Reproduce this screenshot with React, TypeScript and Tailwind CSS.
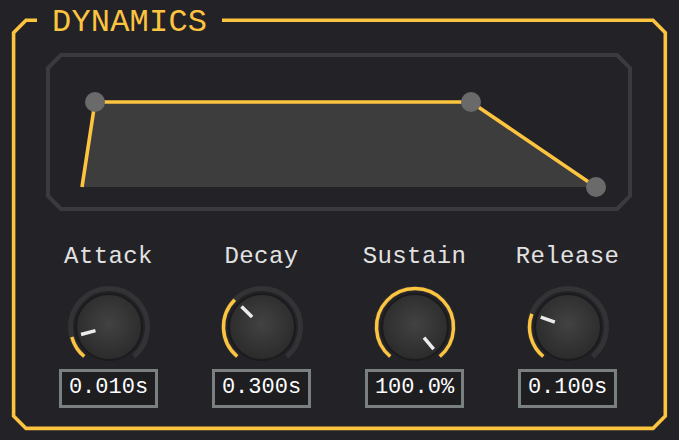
import React from "react";

const YELLOW = "#fcc43f";

function pt(cx: number, cy: number, r: number, deg: number) {
  const a = (deg * Math.PI) / 180;
  return [cx + r * Math.sin(a), cy - r * Math.cos(a)];
}

function arc(cx: number, cy: number, r: number, a0: number, a1: number) {
  const [x0, y0] = pt(cx, cy, r, a0);
  const [x1, y1] = pt(cx, cy, r, a1);
  const large = a1 - a0 > 180 ? 1 : 0;
  return `M ${x0} ${y0} A ${r} ${r} 0 ${large} 1 ${x1} ${y1}`;
}

function Knob({ angle, id }: { angle: number; id: string }) {
  const c = 42;
  const [ix0, iy0] = pt(c, c, 14, angle);
  const [ix1, iy1] = pt(c, c, 29, angle);
  return (
    <svg width="84" height="84" viewBox="0 0 84 84">
      <defs>
        <radialGradient id={id} cx="50%" cy="45%" r="55%">
          <stop offset="0%" stopColor="#424242" />
          <stop offset="100%" stopColor="#2b2b2c" />
        </radialGradient>
      </defs>
      <path d={arc(c, c, 38.5, -140, 140)} stroke="#333336" strokeWidth="5" fill="none" />
      <path d={arc(c, c, 38.5, -140, angle)} stroke={YELLOW} strokeWidth="3.5" fill="none" />
      <circle cx={c} cy={c} r="33" fill={`url(#${id})`} stroke="#1b1b1d" strokeWidth="2" />
      <line x1={ix0} y1={iy0} x2={ix1} y2={iy1} stroke="#ececec" strokeWidth="3.5" />
    </svg>
  );
}

const knobs = [
  { label: "Attack", value: "0.010s", angle: -105 },
  { label: "Decay", value: "0.300s", angle: -45 },
  { label: "Sustain", value: "100.0%", angle: 140 },
  { label: "Release", value: "0.100s", angle: -70 },
];

export default function App() {
  return (
    <div
      className="relative w-[679px] h-[440px] bg-[#232227] overflow-hidden"
      style={{ fontFamily: '"Liberation Mono", "DejaVu Sans Mono", monospace' }}
    >
      <svg className="absolute inset-0 pointer-events-none" width="679" height="440">
        <path
          d="M 37 20.3 L 26 20.3 L 13.6 32.7 L 13.6 416 L 26 428.4 L 653 428.4 L 665.3 416 L 665.3 32.7 L 653 20.3 L 222 20.3"
          stroke={YELLOW}
          strokeWidth="3.6"
          fill="none"
        />
      </svg>
      <div className="relative pt-[7px] pl-[52px] text-[32px] leading-[32px] text-[#fcc43f] tracking-[0.2px]">
        DYNAMICS
      </div>
      <div className="relative mt-[14px] ml-[46px]">
        <svg width="586" height="158" viewBox="0 0 586 158">
          <path
            d="M 15 2 L 571 2 L 584 15 L 584 143 L 571 156 L 15 156 L 2 143 L 2 15 Z"
            stroke="#3b3b3d"
            strokeWidth="4"
            fill="none"
          />
          <polygon points="36,134 49,49 425,49 550,134" fill="#3d3d3e" />
          <polyline
            points="36,134 49,49 425,49 550,134"
            stroke={YELLOW}
            strokeWidth="3.6"
            fill="none"
          />
          <circle cx="49" cy="49" r="10" fill="#6a6a6b" />
          <circle cx="425" cy="49" r="10" fill="#6a6a6b" />
          <circle cx="550" cy="134" r="10" fill="#6a6a6b" />
        </svg>
      </div>
      <div className="relative mt-[33.6px] ml-[32px] grid grid-cols-[153px_153px_153px_153px]">
        {knobs.map((k, i) => (
          <div key={k.label} className="flex flex-col items-center">
            <div className="text-[24px] leading-[24px] text-[#e2e2e2] tracking-[0.4px]">{k.label}</div>
            <div className="mt-[16.4px] h-[84px]">
              <Knob angle={k.angle} id={`kg${i}`} />
            </div>
            <div className="w-[99px] h-[39px] border-[3px] border-[#7a8080] bg-[#1e1e21] flex items-center justify-center text-[22px] leading-[22px] text-white">
              {k.value}
            </div>
          </div>
        ))}
      </div>
    </div>
  );
}
